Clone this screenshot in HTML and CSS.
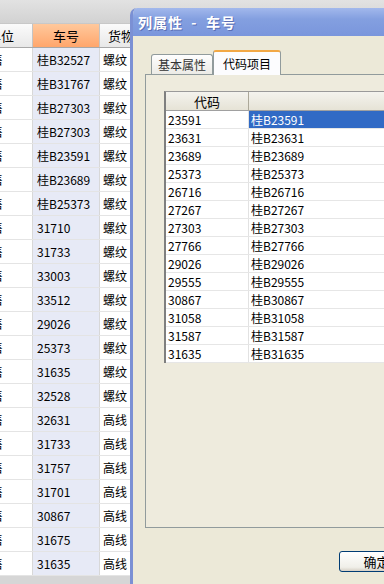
FILE: index.html
```html
<!DOCTYPE html>
<html>
<head>
<meta charset="utf-8">
<link rel="stylesheet" href="styles.css">
</head>
<body>
<div class="screen">
  <div class="topbar"></div>
  <div class="grid">
    <div class="grow ghead">
      <div class="c1 hc">单位</div>
      <div class="c2 hc hot">车号</div>
      <div class="c3 hc left">货物</div>
    </div>
    <div class="grow"><div class="c1">销售</div><div class="c2">桂B32527</div><div class="c3">螺纹</div></div>
    <div class="grow"><div class="c1">销售</div><div class="c2">桂B31767</div><div class="c3">螺纹</div></div>
    <div class="grow"><div class="c1">销售</div><div class="c2">桂B27303</div><div class="c3">螺纹</div></div>
    <div class="grow"><div class="c1">销售</div><div class="c2">桂B27303</div><div class="c3">螺纹</div></div>
    <div class="grow"><div class="c1">销售</div><div class="c2">桂B23591</div><div class="c3">螺纹</div></div>
    <div class="grow"><div class="c1">销售</div><div class="c2">桂B23689</div><div class="c3">螺纹</div></div>
    <div class="grow"><div class="c1">销售</div><div class="c2">桂B25373</div><div class="c3">螺纹</div></div>
    <div class="grow"><div class="c1">销售</div><div class="c2">31710</div><div class="c3">螺纹</div></div>
    <div class="grow"><div class="c1">销售</div><div class="c2">31733</div><div class="c3">螺纹</div></div>
    <div class="grow"><div class="c1">销售</div><div class="c2">33003</div><div class="c3">螺纹</div></div>
    <div class="grow"><div class="c1">销售</div><div class="c2">33512</div><div class="c3">螺纹</div></div>
    <div class="grow"><div class="c1">销售</div><div class="c2">29026</div><div class="c3">螺纹</div></div>
    <div class="grow"><div class="c1">销售</div><div class="c2">25373</div><div class="c3">螺纹</div></div>
    <div class="grow"><div class="c1">销售</div><div class="c2">31635</div><div class="c3">螺纹</div></div>
    <div class="grow"><div class="c1">销售</div><div class="c2">32528</div><div class="c3">螺纹</div></div>
    <div class="grow"><div class="c1">销售</div><div class="c2">32631</div><div class="c3">高线</div></div>
    <div class="grow"><div class="c1">销售</div><div class="c2">31733</div><div class="c3">高线</div></div>
    <div class="grow"><div class="c1">销售</div><div class="c2">31757</div><div class="c3">高线</div></div>
    <div class="grow"><div class="c1">销售</div><div class="c2">31701</div><div class="c3">高线</div></div>
    <div class="grow"><div class="c1">销售</div><div class="c2">30867</div><div class="c3">高线</div></div>
    <div class="grow"><div class="c1">销售</div><div class="c2">31675</div><div class="c3">高线</div></div>
    <div class="grow"><div class="c1">销售</div><div class="c2">31635</div><div class="c3">高线</div></div>
  </div>

  <div class="dialog">
    <div class="titlebar">列属性 &nbsp;- &nbsp;车号</div>
    <div class="dbody">
      <div class="tabs">
        <div class="tab">基本属性</div>
        <div class="tab active">代码项目</div>
      </div>
      <div class="panel">
        <div class="ctable">
          <div class="crow chead"><div class="k">代码</div><div class="v"></div></div>
          <div class="crow"><div class="k">23591</div><div class="v sel">桂B23591</div></div>
          <div class="crow"><div class="k">23631</div><div class="v">桂B23631</div></div>
          <div class="crow"><div class="k">23689</div><div class="v">桂B23689</div></div>
          <div class="crow"><div class="k">25373</div><div class="v">桂B25373</div></div>
          <div class="crow"><div class="k">26716</div><div class="v">桂B26716</div></div>
          <div class="crow"><div class="k">27267</div><div class="v">桂B27267</div></div>
          <div class="crow"><div class="k">27303</div><div class="v">桂B27303</div></div>
          <div class="crow"><div class="k">27766</div><div class="v">桂B27766</div></div>
          <div class="crow"><div class="k">29026</div><div class="v">桂B29026</div></div>
          <div class="crow"><div class="k">29555</div><div class="v">桂B29555</div></div>
          <div class="crow"><div class="k">30867</div><div class="v">桂B30867</div></div>
          <div class="crow"><div class="k">31058</div><div class="v">桂B31058</div></div>
          <div class="crow"><div class="k">31587</div><div class="v">桂B31587</div></div>
          <div class="crow"><div class="k">31635</div><div class="v">桂B31635</div></div>
        </div>
      </div>
      <div class="btn">确定</div>
    </div>
  </div>
</div>
</body>
</html>
```
FILE: styles.css
```css
html, body {
  margin: 0;
  padding: 0;
}
body {
  width: 384px;
  height: 584px;
  overflow: hidden;
  background: #d4d0c8;
  font-family: "Noto Sans CJK SC", "Liberation Sans", sans-serif;
  font-size: 12px;
  color: #000;
}
.screen {
  position: relative;
  width: 384px;
  height: 584px;
  overflow: hidden;
  background: #d6d6d6;
}
.topbar {
  height: 23px;
  background: linear-gradient(#e2e2e2, #d2d2d2);
}
.grid {
  margin-left: -30px;
  width: 200px;
  background: #fff;
}
.grow {
  display: flex;
  height: 24px;
  border-bottom: 1px solid #e4e4e4;
  box-sizing: border-box;
}
.grow > div {
  line-height: 23px;
  white-space: nowrap;
  overflow: hidden;
  box-sizing: border-box;
}
.c1 {
  width: 63px;
  padding-left: 9px;
  border-right: 1px solid #d8d8d8;
}
.c2 {
  width: 67px;
  padding-left: 4px;
  background: #e7eaf6;
  border-right: 1px solid #d8d8d8;
}
.c3 {
  flex: 1;
  padding-left: 3px;
}
.ghead {
  height: 25px;
  border-bottom: 1px solid #a8a8a8;
  border-top: 1px solid #c8c8c8;
}
.ghead .hc {
  line-height: 23px;
  font-size: 13px;
  text-align: center;
  padding-left: 0;
  background: linear-gradient(#fbfbfb, #e8e8e8);
  border-right: 1px solid #c4c4c4;
}
.ghead .hot {
  background: linear-gradient(#ffc89c, #ffa66c);
}
.ghead .left {
  text-align: left;
  padding-left: 8px;
}

/* dialog */
.dialog {
  position: absolute;
  left: 130px;
  top: 8px;
  width: 270px;
  height: 600px;
  background: #ece9d8;
  border-left: 3px solid #7b90d4;
  border-radius: 7px 0 0 0;
  overflow: hidden;
}
.titlebar {
  height: 28px;
  margin-left: -3px;
  padding-left: 8px;
  line-height: 28px;
  font-size: 14px;
  font-weight: bold;
  letter-spacing: 1px;
  color: #fff;
  text-shadow: 1px 1px 0 #5a6fb4;
  background: linear-gradient(#a2b8ec, #839fe0 40%, #7a96dc);
  border-radius: 7px 0 0 0;
  white-space: nowrap;
}
.dbody {
  padding: 13px 0 0 12px;
}
.tabs {
  display: flex;
  align-items: flex-end;
  height: 25px;
  padding-left: 6px;
}
.tab {
  height: 19px;
  line-height: 19px;
  padding: 0 6px;
  font-size: 12px;
  color: #333;
  border: 1px solid #919b9c;
  border-bottom: none;
  border-radius: 3px 3px 0 0;
  background: linear-gradient(#fefefe, #ecebe6);
}
.tab.active {
  position: relative;
  height: 23px;
  line-height: 23px;
  padding: 0 9px;
  color: #000;
  background: #fcfcfe;
  border-top: 2px solid #f2a845;
  margin-bottom: -1px;
  z-index: 1;
}
.panel {
  width: 261px;
  height: 454px;
  border: 1px solid #919b9c;
  border-right: none;
  background: #eeebdd;
  box-sizing: border-box;
  padding: 16px 0 0 18px;
}
.ctable {
  border-left: 2px solid #7f7f7f;
  border-top: 1px solid #9a9a9a;
  background: #fff;
  width: 240px;
}
.crow {
  display: flex;
  height: 18px;
  border-bottom: 1px solid #e6e6e6;
  box-sizing: border-box;
}
.crow > div {
  line-height: 18px;
  white-space: nowrap;
  box-sizing: border-box;
}
.k {
  width: 83px;
  padding-left: 2px;
  border-right: 1px solid #e2e2e2;
}
.v {
  flex: 1;
  padding-left: 2px;
}
.v.sel {
  background: #316ac5;
  color: #fff;
}
.chead {
  height: 19px;
  background: #ece9d8;
  border-bottom: 1px solid #a0a0a0;
}
.chead > div {
  line-height: 19px;
  font-size: 13px;
  background: linear-gradient(#f4f3ee, #e6e3d6);
  border-right: 1px solid #aca899;
}
.chead .k {
  text-align: center;
  padding-left: 0;
}
.btn {
  margin: 23px 0 0 194px;
  width: 75px;
  height: 21px;
  box-sizing: border-box;
  border: 1px solid #003c74;
  border-radius: 3px;
  background: linear-gradient(#ffffff, #f0efe9 80%, #d6d0c5);
  text-align: center;
  line-height: 19px;
  font-size: 13px;
}
```
